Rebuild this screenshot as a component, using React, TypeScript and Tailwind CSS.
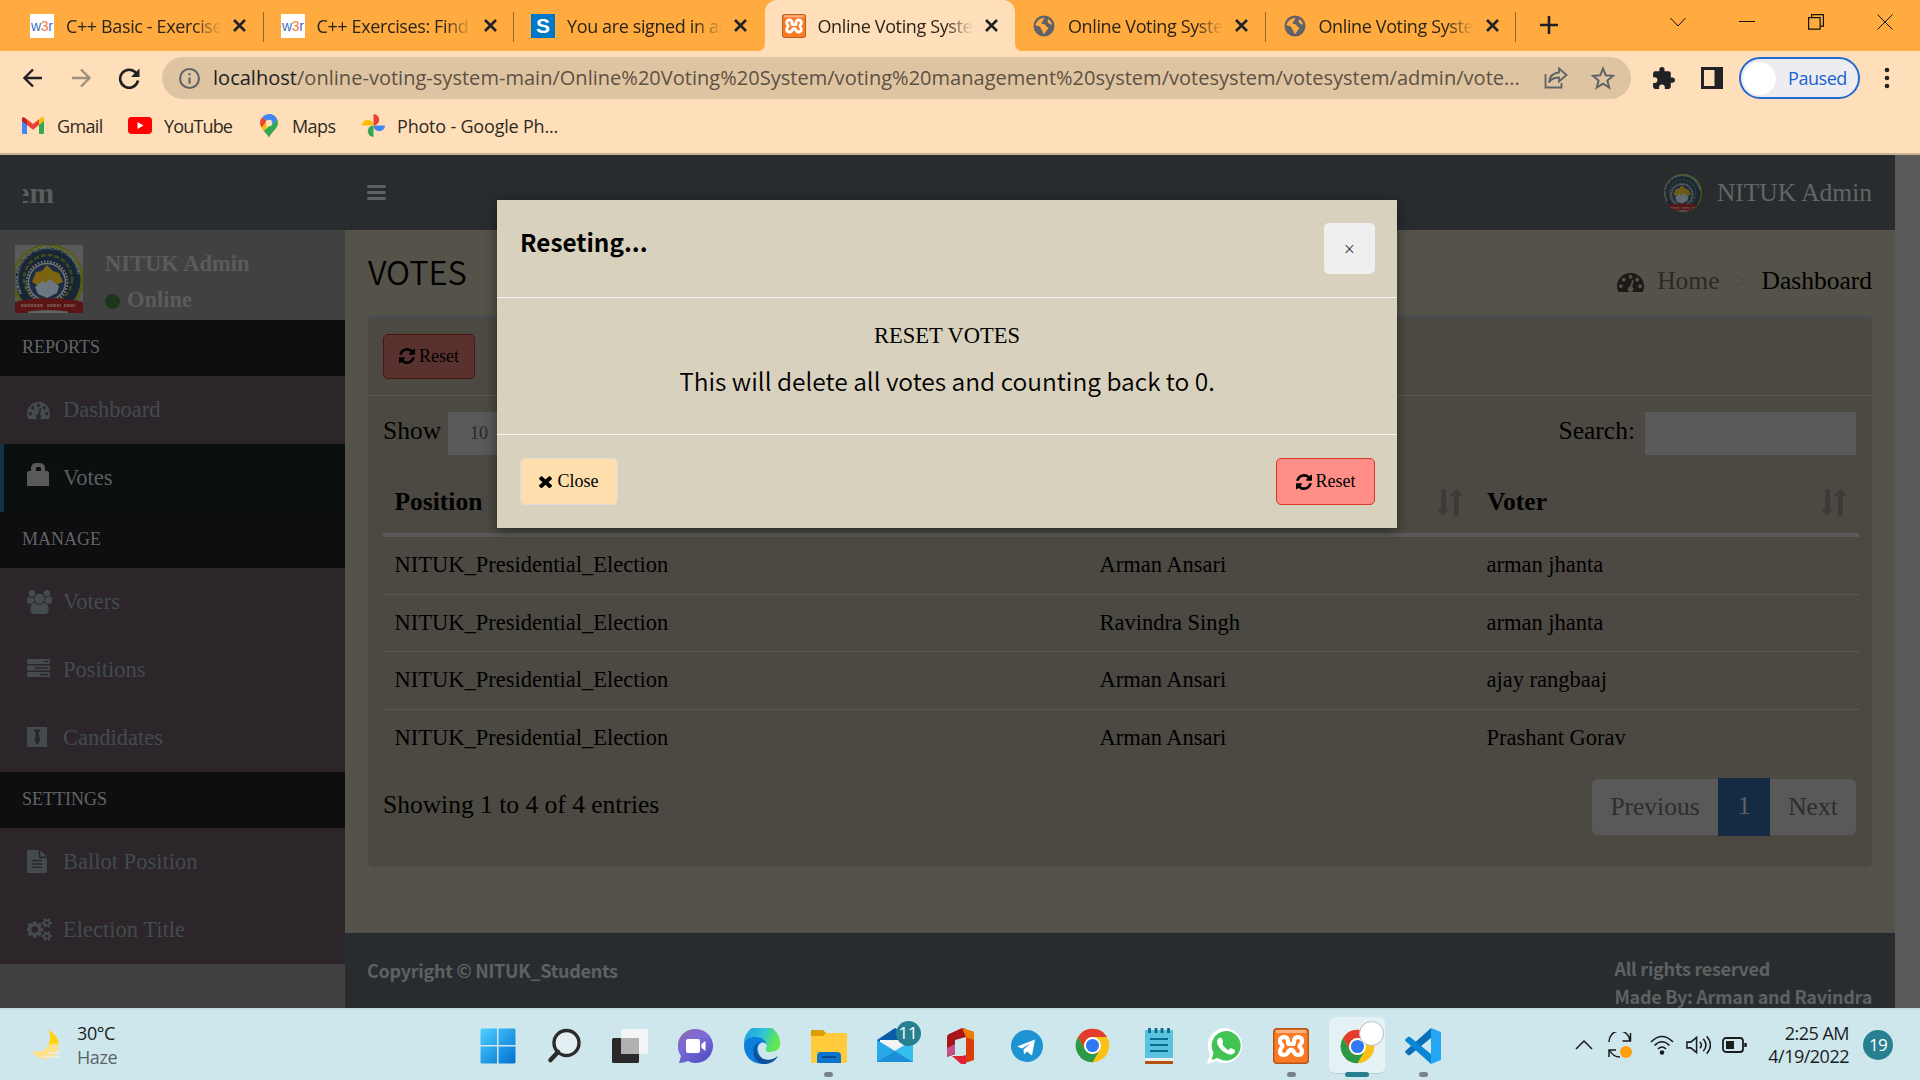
import React from "react";

const UI = "font-['Open_Sans',sans-serif]";
const TIMES = "font-['Liberation_Serif',serif]";
const SOURCE = "font-['Noto_Sans_CJK_JP',sans-serif]";

/* ---------- glyph icons ---------- */

const P = {
  dash: "M384 1152q0-53-37.5-90.5t-90.5-37.5-90.5 37.5-37.5 90.5 37.5 90.5 90.5 37.5 90.5-37.5 37.5-90.5zm192-448q0-53-37.5-90.5t-90.5-37.5-90.5 37.5-37.5 90.5 37.5 90.5 90.5 37.5 90.5-37.5 37.5-90.5zm428 481l101-382q6-26-7.5-48.5t-38.5-29.5-48 6.5-30 39.5l-101 382q-60 5-107 43.5t-63 98.5q-20 77 20 146t117 89 146-20 89-117q16-60-6-117t-72-91zm660-33q0-53-37.5-90.5t-90.5-37.5-90.5 37.5-37.5 90.5 37.5 90.5 90.5 37.5 90.5-37.5 37.5-90.5zm-640-640q0-53-37.5-90.5t-90.5-37.5-90.5 37.5-37.5 90.5 37.5 90.5 90.5 37.5 90.5-37.5 37.5-90.5zm448 192q0-53-37.5-90.5t-90.5-37.5-90.5 37.5-37.5 90.5 37.5 90.5 90.5 37.5 90.5-37.5 37.5-90.5zm320 448q0 261-141 483-19 29-54 29h-1402q-35 0-54-29-141-221-141-483 0-182 71-348t191-286 286-191 348-71 348 71 286 191 191 286 71 348z",
  refresh: "M1639 1056q0 5-1 7-64 268-268 434.5t-478 166.5q-146 0-282.5-55t-243.5-157l-129 129q-19 19-45 19t-45-19-19-45v-448q0-26 19-45t45-19h448q26 0 45 19t19 45-19 45l-137 137q71 66 161 102t187 36q134 0 250-65t186-179q11-17 53-117 8-23 30-23h192q13 0 22.5 9.5t9.5 22.5zm25-800v448q0 26-19 45t-45 19h-448q-26 0-45-19t-19-45 19-45l138-138q-148-137-349-137-134 0-250 65t-186 179q-11 17-53 117-8 23-30 23h-199q-13 0-22.5-9.5t-9.5-22.5v-7q65-268 270-434.5t480-166.5q146 0 284 55.5t245 156.5l130-129q19-19 45-19t45 19 19 45z",
  times: "M1490 1322q0 40-28 68l-136 136q-28 28-68 28t-68-28l-294-294-294 294q-28 28-68 28t-68-28l-136-136q-28-28-28-68t28-68l294-294-294-294q-28-28-28-68t28-68l136-136q28-28 68-28t68 28l294 294 294-294q28-28 68-28t68 28l136 136q28 28 28 68t-28 68l-294 294 294 294q28 28 28 68z",
  users: "M657 896q-162 5-265 128h-134q-82 0-138-40.5t-56-118.5q0-353 124-353 6 0 43.5 21t97.5 42.5 119 21.5q67 0 133-23-5 37-5 66 0 159 81 297zm1071 637q0 120-73 189.5t-194 69.5h-874q-121 0-194-69.5t-73-189.5q0-53 3.5-103.5t14-109 26.5-108.5 43-97.5 62-81 85.5-53.5 111.5-20q10 0 43 21.5t73 48 107 48 135 21.5 135-21.5 107-48 73-48 43-21.5q61 0 111.5 20t85.5 53.5 62 81 43 97.5 26.5 108.5 14 109 3.5 103.5zm-1024-1277q0 106-75 181t-181 75-181-75-75-181 75-181 181-75 181 75 75 181zm704 384q0 159-112.5 271.5t-271.5 112.5-271.5-112.5-112.5-271.5 112.5-271.5 271.5-112.5 271.5 112.5 112.5 271.5zm576 225q0 78-56 118.5t-138 40.5h-134q-103-123-265-128 81-138 81-297 0-29-5-66 66 23 133 23 59 0 119-21.5t97.5-42.5 43.5-21q124 0 124 353zm-128-609q0 106-75 181t-181 75-181-75-75-181 75-181 181-75 181 75 75 181z",
  tasks: "M1024 1408h640v-128h-640v128zm-384-512h1024v-128h-1024v128zm640-512h384v-128h-384v128zm512 832v256q0 26-19 45t-45 19h-1664q-26 0-45-19t-19-45v-256q0-26 19-45t45-19h1664q26 0 45 19t19 45zm0-512v256q0 26-19 45t-45 19h-1664q-26 0-45-19t-19-45v-256q0-26 19-45t45-19h1664q26 0 45 19t19 45zm0-512v256q0 26-19 45t-45 19h-1664q-26 0-45-19t-19-45v-256q0-26 19-45t45-19h1664q26 0 45 19t19 45z",
  file: "M1596 476q14 14 28 36h-472v-472q22 14 36 28zm-476 164h544v1056q0 40-28 68t-68 28h-1344q-40 0-68-28t-28-68v-1600q0-40 28-68t68-28h800v544q0 40 28 68t68 28zm160 736v-64q0-14-9-23t-23-9h-704q-14 0-23 9t-9 23v64q0 14 9 23t23 9h704q14 0 23-9t9-23zm0-256v-64q0-14-9-23t-23-9h-704q-14 0-23 9t-9 23v64q0 14 9 23t23 9h704q14 0 23-9t9-23zm0-256v-64q0-14-9-23t-23-9h-704q-14 0-23 9t-9 23v64q0 14 9 23t23 9h704q14 0 23-9t9-23z",
  cogs: "M832 896q0-106-75-181t-181-75-181 75-75 181 75 181 181 75 181-75 75-181zm768 512q0-52-38-90t-90-38-90 38-38 90q0 53 37.5 90.5t90.5 37.5 90.5-37.5 37.5-90.5zm0-1024q0-52-38-90t-90-38-90 38-38 90q0 53 37.5 90.5t90.5 37.5 90.5-37.5 37.5-90.5zm-384 421v185q0 10-7 19.5t-16 10.5l-155 24q-11 35-32 76 34 48 90 115 7 11 7 20 0 12-7 19-23 30-82.5 89.5t-78.5 59.5q-11 0-21-7l-115-90q-37 19-77 31-11 108-23 155-7 24-30 24h-186q-11 0-20-7.5t-10-17.5l-23-153q-34-10-75-31l-118 89q-7 7-20 7-11 0-21-8-144-133-144-160 0-9 7-19 10-14 41-53t47-61q-23-44-35-82l-152-24q-10-1-17-9.5t-7-19.5v-185q0-10 7-19.5t16-10.5l155-24q11-35 32-76-34-48-90-115-7-11-7-20 0-12 7-20 22-30 82-89t79-59q11 0 21 7l115 90q34-18 77-32 11-108 23-154 7-24 30-24h186q11 0 20 7.5t10 17.5l23 153q34 10 75 31l118-89q8-7 20-7 11 0 21 8 144 133 144 160 0 8-7 19-12 16-42 54t-45 60q23 48 34 82l152 23q10 2 17 10.5t7 19.5zm640 533v140q0 16-149 31-12 27-30 52 51 113 51 138 0 4-4 7-122 71-124 71-8 0-46-47t-52-68q-20 2-30 2t-30-2q-14 21-52 68t-46 47q-2 0-124-71-4-3-4-7 0-25 51-138-18-25-30-52-149-15-149-31v-140q0-16 149-31 13-29 30-52-51-113-51-138 0-4 4-7 4-2 35-20t59-34 30-16q8 0 46 46.5t52 67.5q20-2 30-2t30 2q51-71 92-112l6-2q4 0 124 70 4 3 4 7 0 25-51 138 17 23 30 52 149 15 149 31zm0-1024v140q0 16-149 31-12 27-30 52 51 113 51 138 0 4-4 7-122 71-124 71-8 0-46-47t-52-68q-20 2-30 2t-30-2q-14 21-52 68t-46 47q-2 0-124-71-4-3-4-7 0-25 51-138-18-25-30-52-149-15-149-31v-140q0-16 149-31 13-29 30-52-51-113-51-138 0-4 4-7 4-2 35-20t59-34 30-16q8 0 46 46.5t52 67.5q20-2 30-2t30 2q51-71 92-112l6-2q4 0 124 70 4 3 4 7 0 25-51 138 17 23 30 52 149 15 149 31z",
  lock: "M4 8V5a5 5 0 0 1 5-5h4a5 5 0 0 1 5 5v3h2a2 2 0 0 1 2 2v13H0V10a2 2 0 0 1 2-2zM9 8h5V5.500a1.500 1.500 0 0 0-1.500-1.500h-2a1.500 1.500 0 0 0-1.500 1.500z",
  tie: "M0 0h20v20H0zM6 2.500l3 3.500-1.800 7.500L10.200 18l3-4.500L11.500 6l2.500-3.500z",
};

function Glyph({ d, box, className }: { d: string; box: string; className: string }) {
  return (
    <svg viewBox={box} className={className} fill="currentColor" fillRule="evenodd" preserveAspectRatio="none">
      <path d={d} />
    </svg>
  );
}

/* ---------- logos ---------- */

const Xampp = ({ className }: { className: string }) => (
  <svg viewBox="0 0 36 36" className={className}>
    <rect x="0.700" y="0.700" width="34.600" height="34.600" rx="3" fill="#fb7a24" stroke="#b4561b" strokeWidth="1.400" />
    <path d="M3 2h30v3H3z" fill="#f9b184" />
    <g fill="none" stroke="#fff" strokeWidth="4.200" strokeLinejoin="round" strokeLinecap="round">
      <path d="M15 12.500Q14.500 9 10.800 9 6.500 9.500 7 13.500q.2 2 1.700 3 1.300 1.500 0 3Q7 21 7 23q0 4 4 4 3 0 4.500-3.500" />
      <path d="M21 12.500Q21.500 9 25.200 9q4.300.5 3.800 4.500-.2 2-1.700 3-1.300 1.500 0 3Q29 21 29 23q0 4-4 4-3 0-4.500-3.500" />
      <path d="M15 12.500v2.500M21 12.500v2.500M15.500 23.500q2.500-4 5 0" />
    </g>
    <path d="M14 14h8v4h-8z" fill="#fff" />
  </svg>
);

const Globe = () => (
  <svg viewBox="0 0 24 24" className="size-6">
    <circle cx="12" cy="12" r="10.500" fill="#5f6368" />
    <path d="M5 8c2-3 5-4.500 8-4-2 1-1 2-2.500 3.500-1 .8-1 2-.5 2.500 2 0 4 .5 4.500 3 2.500 0 2 2 .5 3-1.500.8-1 3-3 4-1.500-.5-1-3-2-4-1.500-1-1-2.500-2.500-3.500-1.500-1-3-1-4-1 0-1.300.5-2.500 1.500-3.500zM16 5c2 1 3.500 3 4 5.500-1.500 0-2.500-.5-3.500-1.500s-1-2.500-.5-4z" fill="#ffab40" />
  </svg>
);

const W3r = () => (
  <svg viewBox="0 0 24 24" className="size-6">
    <rect width="24" height="24" fill="#fff" />
    <text x="1" y="17" textLength="22" className="font-['Liberation_Sans',sans-serif] text-[14px]" fill="#3f6fc4">
      w<tspan fill="#f07a3a">3</tspan>r
    </text>
  </svg>
);

const Swayam = () => (
  <span className="flex size-6 items-center justify-center bg-[#0078c8] font-['Liberation_Sans',sans-serif] text-[21px] font-bold leading-none text-white">S</span>
);

const Chrome = ({ className }: { className: string }) => (
  <svg viewBox="0 0 48 48" className={className}>
    <circle cx="24" cy="24" r="23" fill="#fbc116" />
    <path d="M4.080 12.500A23 23 0 0 1 43.920 12.500H24A11.500 11.500 0 0 0 14 29.700z" fill="#e33b2e" />
    <path d="M4.080 12.500A23 23 0 0 0 24 47L34 29.700A11.500 11.500 0 0 1 14 29.700z" fill="#2a9a48" />
    <circle cx="24" cy="24" r="11.500" fill="#fff" />
    <circle cx="24" cy="24" r="9" fill="#3079f0" />
  </svg>
);

function Emblem({ id, className }: { id: string; className: string }) {
  return (
    <svg viewBox="0 0 68 68" className={className}>
      <rect width="68" height="68" fill="#5a5a5a" />
      <ellipse cx="33" cy="35" rx="36" ry="36" fill="#565a14" />
      <circle cx="33" cy="35" r="32.500" fill="#172535" />
      <path id={id} d="M5 52A32 32 0 1 1 61 52" transform="translate(2.500 0) scale(.93)" fill="none" />
      <text className="font-['Liberation_Sans',sans-serif] text-[4.600px] font-bold" fill="#707a80">
        <textPath href={`#${id}`} textLength="104">NATIONAL INSTITUTE OF TECHNOLOGY UTTARAKHAND</textPath>
      </text>
      <circle cx="33" cy="34" r="24" fill="none" stroke="#3d4a1e" strokeWidth="2.600" strokeDasharray="5 2" />
      <circle cx="32" cy="37" r="20.500" fill="none" stroke="#747474" strokeWidth="2" strokeDasharray="1.700 1.500" />
      <circle cx="32" cy="37" r="18.500" fill="#1d2d44" stroke="#747474" strokeWidth="1.500" />
      <path d="M17 37l4-10 6-1 5-6 6 6 6 2 4 9-8 3H22z" fill="#7b6310" />
      <path d="M20 42l7-6 4 2 3-4 5 3 5 4-2 7-10 5-9-4z" fill="#6c7780" />
      <path d="M0 57q34-8 68 0v11H0z" fill="#5b1517" />
      <path d="M13 66.500q20-3 40 0V68H13z" fill="#626262" />
      <path d="M6 60.500h22M32 60.500h14M49 60.500h11" stroke="#7a4a4a" strokeWidth="3" strokeDasharray="2.500 .7" />
    </svg>
  );
}

/* ---------- browser chrome ---------- */

const tabs = [
  { icon: <W3r />, title: "C++ Basic - Exercises", sep: true, cls: "" },
  { icon: <W3r />, title: "C++ Exercises: Find", sep: true, cls: "" },
  { icon: <Swayam />, title: "You are signed in as", sep: false, cls: "" },
  { icon: <Xampp className="size-6" />, title: "Online Voting System", sep: false, cls: "bg-[#ffdfb9] rounded-t-[12px]" },
  { icon: <Globe />, title: "Online Voting System", sep: true, cls: "" },
  { icon: <Globe />, title: "Online Voting System", sep: true, cls: "" },
];

function TabBar() {
  return (
    <div className="flex h-[51px] bg-[#ffab40] pl-[13px] text-[#2a2419]">
      {tabs.map((t, i) => (
        <div key={i} className={`relative flex h-[51px] w-[250.500px] shrink-0 items-center pl-[17px] ${t.cls}`}>
          {i === 3 && (
            <>
              <svg className="absolute bottom-0 -left-2 size-2" viewBox="0 0 8 8"><path d="M8 0v8H0q8 0 8-8z" fill="#ffdfb9" /></svg>
              <svg className="absolute bottom-0 -right-2 size-2" viewBox="0 0 8 8"><path d="M0 0v8h8q-8 0-8-8z" fill="#ffdfb9" /></svg>
            </>
          )}
          {t.icon}
          <span className={`ml-[12px] w-[155px] overflow-hidden whitespace-nowrap text-[18px] leading-6 tracking-[-0.380px] [mask-image:linear-gradient(to_right,#000_82%,transparent)] ${UI}`}>{t.title}</span>
          <svg viewBox="0 0 13 13" className="ml-[12px] size-[13px]"><path d="M1 1l11 11M12 1L1 12" stroke="#202124" strokeWidth="2.600" /></svg>
          {t.sep && <span className="absolute right-0 top-3 h-[30px] w-px bg-[#93672f]" />}
        </div>
      ))}
      <svg viewBox="0 0 18 18" className="ml-[24px] mt-[16px] size-[18px] shrink-0"><path d="M9 0v18M0 9h18" stroke="#202124" strokeWidth="2.600" /></svg>
      <div className="ml-auto mr-[27px] flex h-[43px] items-center gap-[53px]">
        <svg viewBox="0 0 16 16" className="size-4" fill="none" stroke="#111"><path d="M.500 4l7.500 8 7.500-8" /></svg>
        <svg viewBox="0 0 16 16" className="size-4" fill="none" stroke="#111"><path d="M0 7.500h16" /></svg>
        <svg viewBox="0 0 16 16" className="size-4" fill="none" stroke="#111" strokeWidth="1.200"><path d="M.600 3.600h11.500v11.500H.600zM3.600 3.500V.600h11.800v11.500h-3" /></svg>
        <svg viewBox="0 0 16 16" className="size-4" fill="none" stroke="#111"><path d="M.500.500l15 15M15.500.500l-15 15" /></svg>
      </div>
    </div>
  );
}

function Toolbar() {
  return (
    <div className="flex h-[54px] items-center bg-[#ffdfb9]">
      <svg viewBox="0 0 20 20" className="ml-[23px] size-5" fill="none" stroke="#202124" strokeWidth="2.400"><path d="M19 10H2M10 1.500L1.500 10l8.500 8.500" /></svg>
      <svg viewBox="0 0 20 20" className="ml-[28px] size-5" fill="none" stroke="#9f8f7c" strokeWidth="2.400"><path d="M1 10h17M10 1.500l8.500 8.500-8.500 8.500" /></svg>
      <svg viewBox="0 0 22 22" className="ml-[27px] size-[22px]" fill="none" stroke="#202124" strokeWidth="2.600"><path d="M18.500 6.500A9 9 0 1 0 20 13.500" /><path d="M21.500 1.500v8.500H13z" fill="#202124" stroke="none" /></svg>
      <div className="ml-[22px] flex h-[42px] w-[1469px] shrink-0 items-center rounded-full bg-[#dfc4a1] text-[#5c5144]">
        <svg viewBox="0 0 20 20" className="ml-[17px] size-[21px]" fill="none" stroke="#5f6368" strokeWidth="2"><circle cx="10" cy="10" r="9" /><path d="M10 9v6M10 5v2" /></svg>
        <span className={`ml-[13px] w-[1310px] whitespace-nowrap text-[20px] leading-[26px] tracking-[0.025px] ${UI}`}>
          <span className="text-[#202124]">localhost</span>/online-voting-system-main/Online%20Voting%20System/voting%20management%20system/votesystem/votesystem/admin/vote...
        </span>
        <svg viewBox="0 0 24 22" className="ml-[21px] h-[22px] w-[24px] shrink-0" fill="none" stroke="#5f6368" strokeWidth="1.800"><path d="M1.500 7v13.500h16V16" /><path d="M15 1.500l7.500 6.500-7.500 6.500v-4c-5 0-8 1.500-10 5 .5-6 4-9.500 10-10z" /></svg>
        <svg viewBox="0 0 24 24" className="ml-[23px] size-6 shrink-0" fill="none" stroke="#5f6368" strokeWidth="2"><path d="M12 2.500l2.700 6.800 7.300.5-5.600 4.700 1.800 7.100-6.200-3.900-6.200 3.900 1.800-7.100L2 9.800l7.300-.5z" /></svg>
      </div>
      <svg viewBox="0 0 24 24" className="ml-[20px] size-[25px] shrink-0" fill="#202124"><path d="M20.500 11H19V7a2 2 0 0 0-2-2h-4V3.500a2.500 2.500 0 0 0-5 0V5H4a2 2 0 0 0-2 2v3.800h1.500a2.700 2.700 0 0 1 0 5.400H2V20a2 2 0 0 0 2 2h3.800v-1.500a2.700 2.700 0 0 1 5.400 0V22H17a2 2 0 0 0 2-2v-4h1.500a2.500 2.500 0 0 0 0-5z" /></svg>
      <svg viewBox="0 0 22 22" className="ml-[25px] h-[22px] w-[22px] shrink-0" fillRule="evenodd" fill="#202124"><path d="M0 0h22v22H0zM3 3v16h10.500V3z" /></svg>
      <div className="ml-[16px] flex h-[42px] w-[121px] shrink-0 items-center rounded-full border-2 border-[#2269d3] bg-[#ededf1]">
        <span className="ml-[2px] size-[33px] rounded-full bg-white" />
        <span className={`ml-[12px] text-[18px] leading-6 tracking-[-0.450px] text-[#1b62d0] ${UI}`}>Paused</span>
      </div>
      <svg viewBox="0 0 6 24" className="ml-[24px] h-6 w-[6px]" fill="#202124"><circle cx="3" cy="4" r="2.300" /><circle cx="3" cy="12" r="2.300" /><circle cx="3" cy="20" r="2.300" /></svg>
    </div>
  );
}

function Bookmarks() {
  const txt = `whitespace-nowrap text-[18px] leading-6 text-[#2f291f] ${UI}`;
  return (
    <div className="flex h-[50px] items-center border-b-2 border-[#c9b08f] bg-[#ffdfb9] pl-[22px] pb-[7px]">
      <svg viewBox="0 0 22 17" className="h-[17px] w-[22px]"><path d="M0 2v13.500A1.500 1.500 0 0 0 1.500 17H5V7z" fill="#4285f4" /><path d="M22 2v13.500a1.500 1.500 0 0 1-1.500 1.500H17V7z" fill="#34a853" /><path d="M17 2.500L20 .3c1-.6 2 .2 2 1.700v2L17 8z" fill="#fbbc04" /><path d="M0 4V2C0 .3 1 0 2 .3l3 2.200V8z" fill="#c5221f" /><path d="M5 2.300l6 4.700 6-4.700V8l-6 4.700L5 8z" fill="#ea4335" /></svg>
      <span className={`ml-[13px] w-[46px] tracking-[-0.650px] ${txt}`}>Gmail</span>
      <svg viewBox="0 0 24 20" className="ml-[25px] h-[17px] w-6" preserveAspectRatio="none"><rect width="24" height="20" rx="4" fill="#f00" /><path d="M9.500 6v8l6-4z" fill="#fff" /></svg>
      <span className={`ml-[12px] w-[70px] tracking-[-0.850px] ${txt}`}>YouTube</span>
      <svg viewBox="0 0 18 24" className="ml-[26px] h-6 w-[18px]"><path d="M9 24c1-5 9-9 9-15a9 9 0 0 0-.8-3.800L3.500 17C6 19.500 8 21 9 24z" fill="#34a853" /><path d="M1.500 13.500C2 15 3 16.300 3.500 17L12 7 6 7.500z" fill="#fbbc04" /><path d="M2.200 3.200A9 9 0 0 0 1.500 13.500L7 7z" fill="#ea4335" /><path d="M2.200 3.200A9 9 0 0 1 17.200 5.200L12 11 7 7z" fill="#4285f4" /><circle cx="9" cy="9" r="3.300" fill="#ffdfb9" /></svg>
      <span className={`ml-[14px] w-[44px] tracking-[-0.600px] ${txt}`}>Maps</span>
      <svg viewBox="0 0 24 24" className="ml-[26px] size-[23px]"><path d="M12 0a6 6 0 0 1 0 12z" fill="#ea4335" /><path d="M24 12a6 6 0 0 1-12 0z" fill="#4285f4" /><path d="M12 24a6 6 0 0 1 0-12z" fill="#34a853" /><path d="M0 12a6 6 0 0 1 12 0z" fill="#fbbc04" /></svg>
      <span className={`ml-[12px] tracking-[-0.200px] ${txt}`}>Photo - Google Ph...</span>
    </div>
  );
}

/* ---------- sidebar ---------- */

const NavHead = ({ children }: { children: React.ReactNode }) => (
  <div className="h-[56px] bg-[#0e0e10] pl-[22px] text-[18px] leading-[54px] text-[#636566]">{children}</div>
);

function NavItem({ icon, label, active }: { icon: React.ReactNode; label: string; active?: boolean }) {
  return (
    <div className={active ? "flex h-[68px] items-center border-l-4 border-[#153143] bg-[#0a0f10] pl-[23px] text-[#5e5e5e]" : "flex h-[68px] items-center bg-[#2c262a] pl-[27px] text-[#434b4e]"}>
      <span className="flex w-[36px] items-center pb-px">{icon}</span>
      <span className="text-[22.500px] leading-[26px]">{label}</span>
    </div>
  );
}

function Sidebar() {
  return (
    <aside className={`flex w-[345px] shrink-0 flex-col bg-[#414141] ${TIMES}`}>
      <div className="flex h-[75px] items-center bg-[#282c2f] pl-[23px]">
        <div className="flex h-[40px] w-[31px] justify-end overflow-hidden">
          <span className="whitespace-nowrap text-[29.500px] font-bold leading-[40px] text-[#5b5c5d]">em</span>
        </div>
      </div>
      <div className="flex h-[90px] pl-[15px] pt-[15px]">
        <Emblem id="arc-side" className="size-[68px]" />
        <div className="ml-[22px] text-[22.500px] font-bold leading-[26px] text-[#5b5b5b]">
          <div className="mt-[6px]">NITUK Admin</div>
          <div className="mt-[10px] flex items-center"><span className="mr-[7px] mt-[2px] size-[15px] rounded-full bg-[#1c361d]" />Online</div>
        </div>
      </div>
      <NavHead>REPORTS</NavHead>
      <NavItem label="Dashboard" icon={<Glyph d={P.dash} box="0 128 1792 1408" className="h-[19px] w-[23px]" />} />
      <NavItem label="Votes" active icon={<Glyph d={P.lock} box="0 0 22 23" className="mb-[6px] h-[23px] w-[22px] text-[#595959]" />} />
      <NavHead>MANAGE</NavHead>
      <NavItem label="Voters" icon={<Glyph d={P.users} box="64 0 1920 1792" className="h-[24px] w-[25px]" />} />
      <NavItem label="Positions" icon={<Glyph d={P.tasks} box="0 128 1792 1408" className="mb-[3px] h-[18px] w-[23px]" />} />
      <NavItem label="Candidates" icon={<Glyph d={P.tie} box="0 0 20 20" className="mb-px h-[20px] w-[20px]" />} />
      <NavHead>SETTINGS</NavHead>
      <NavItem label="Ballot Position" icon={<Glyph d={P.file} box="128 0 1536 1792" className="mb-px h-[23px] w-[20px]" />} />
      <NavItem label="Election Title" icon={<Glyph d={P.cogs} box="0 0 1856 1792" className="h-[23px] w-[25px]" />} />
    </aside>
  );
}

/* ---------- main content ---------- */

const rows = [
  ["Arman Ansari", "arman jhanta"],
  ["Ravindra Singh", "arman jhanta"],
  ["Arman Ansari", "ajay rangbaaj"],
  ["Arman Ansari", "Prashant Gorav"],
];

const Sort = ({ className }: { className: string }) => (
  <svg viewBox="0 0 26 27" className={className} fill="#3c3b37"><path d="M4 0h5v20h4l-6.500 7L0 20h4zM17 27h5V7h4l-6.500-7L13 7h4z" /></svg>
);

function Main() {
  return (
    <main className={`flex w-[1550px] shrink-0 flex-col bg-[#555249] text-black ${TIMES}`}>
      <header className="flex h-[75px] items-center bg-[#282c2f] pl-[22px] pr-[23px] text-[#636566]">
        <div className="flex h-[15px] w-[19px] flex-col justify-between">
          <span className="h-[3px] rounded-sm bg-[#5e6062]" /><span className="h-[3px] rounded-sm bg-[#5e6062]" /><span className="h-[3px] rounded-sm bg-[#5e6062]" />
        </div>
        <Emblem id="arc-top" className="ml-auto size-[38px] rounded-full opacity-85" />
        <span className="ml-[15px] pt-[2px] text-[25.500px]">NITUK Admin</span>
      </header>

      <div className="flex h-[85px] justify-between pl-[23px] pr-[23px]">
        <h1 className={`pt-[17px] text-[32.500px] font-[350] leading-[48px] tracking-[0px] ${SOURCE}`}>VOTES</h1>
        <div className="flex items-center pt-[17px] text-[25.500px] leading-[30px]">
          <Glyph d={P.dash} box="0 128 1792 1408" className="h-[21px] w-[27px] text-[#1b1a18]" />
          <span className="ml-[13px] text-[#2b2925]">Home</span>
          <span className="w-[42px] text-center text-[#4b4a48]">&gt;</span>
          <span>Dashboard</span>
        </div>
      </div>

      <section className="ml-[23px] mr-[23px] h-[551px] rounded-[5px] border-t-4 border-[#4b4c4f] bg-[#4c4942] shadow-[0_1px_1px_rgba(0,0,0,0.100)]">
        <div className="h-[77px] border-b border-[#5a5957] pl-[15px] pt-[15px]">
          <div className="flex h-[45px] w-[92px] items-center justify-center rounded-[5px] border border-[#4b140d] bg-[#59322f] pb-px text-[18px]">
            <Glyph d={P.refresh} box="128 128 1536 1536" className="mr-[4px] size-[16px]" />Reset
          </div>
        </div>
        <div className="pl-[15px] pr-[16px] text-[25.500px]">
          <div className="flex h-[74px] items-start pt-[16px] leading-[38px]">
            <span>Show</span>
            <div className="ml-[7px] h-[43px] w-[90px] bg-[#595959] pl-[22px] text-[18px] leading-[43px] text-[#292929]">10</div>
            <span className="ml-auto">Search:</span>
            <div className="ml-[10px] h-[43px] w-[211px] bg-[#595959]" />
          </div>
          <div className="flex h-[67px] w-[1476px] items-center border-b-4 border-[#5a5a59] pl-[11.500px] pt-[1px] font-bold">
            <span className="w-[704.500px]">Position</span>
            <span className="w-[338px]">Candidate</span>
            <Sort className="h-[27px] w-[26px]" />
            <span className="ml-[24px]">Voter</span>
            <Sort className="ml-auto mr-[12px] h-[27px] w-[26px]" />
          </div>
          {rows.map((r, i) => (
            <div key={i} className={`flex h-[57.500px] w-[1476px] items-center pl-[11.500px] text-[22.500px] ${i < 3 ? "border-b border-[#5a5957]" : ""}`}>
              <span className="w-[705px]">NITUK_Presidential_Election</span>
              <span className="w-[387px]">{r[0]}</span>
              <span>{r[1]}</span>
            </div>
          ))}
          <div className="flex items-start pt-[11px]">
            <span className="pt-[8px] leading-[38px]">Showing 1 to 4 of 4 entries</span>
            <div className="ml-auto flex h-[58px] items-center overflow-hidden rounded-[6px] text-center leading-[56px] text-[#2d2d2d]">
              <span className="h-[56px] w-[126px] rounded-l-[6px] bg-[#595959]">Previous</span>
              <span className="h-[58px] w-[52px] bg-[#142b43] text-[#5f6368]">1</span>
              <span className="h-[56px] w-[86px] rounded-r-[6px] bg-[#595959]">Next</span>
            </div>
          </div>
        </div>
      </section>

      <footer className={`mt-[66px] flex h-[76px] justify-between overflow-hidden border-t border-[#4b4d4f] bg-[#282c2f] pl-[22px] pr-[23px] text-[18px] font-bold leading-[28px] tracking-[-0.270px] text-[#5f6163] ${SOURCE}`}>
        <span className="pt-[23px]">Copyright © NITUK_Students</span>
        <span className="whitespace-nowrap pt-[21px]">All rights reserved<br />Made By: Arman and Ravindra</span>
      </footer>
    </main>
  );
}

/* ---------- dialog ---------- */

function Modal() {
  return (
    <div className="absolute left-[497px] top-[200px] flex h-[328px] w-[900px] flex-col bg-[#d8d1bd] text-black shadow-[0_3px_12px_rgba(0,0,0,0.450)]">
      <div className="flex h-[98px] justify-between border-b border-[#f4f4f4] pl-[23px] pr-[22px] pt-[23px]">
        <span className={`text-[24.300px] font-bold leading-[38px] ${SOURCE}`}>Reseting...</span>
        <span className={`flex h-[51px] w-[51px] items-center justify-center rounded-[5px] bg-[#efefef] text-[20px] text-[#444] ${TIMES}`}>×</span>
      </div>
      <div className="flex h-[137px] flex-col items-center border-b border-[#f4f4f4] pt-[23px]">
        <p className={`text-[22.500px] leading-[30px] ${TIMES}`}>RESET VOTES</p>
        <h2 className={`mt-[10px] whitespace-nowrap text-[24.500px] font-[350] leading-[40px] ${SOURCE}`}>This will delete all votes and counting back to 0.</h2>
      </div>
      <div className={`flex justify-between pl-[23px] pr-[22px] pt-[23px] text-[18px] ${TIMES}`}>
        <span className="flex h-[47px] w-[98px] items-center justify-center rounded-[5px] border border-[#ddd] bg-[#ffdead]">
          <Glyph d={P.times} box="302 238 1188 1316" className="mr-[5px] h-[13px] w-[13px]" />Close
        </span>
        <span className="flex h-[47px] w-[99px] items-center justify-center rounded-[5px] border border-[#d73925] bg-[#ff8e88]">
          <Glyph d={P.refresh} box="128 128 1536 1536" className="mr-[4px] size-[16px]" />Reset
        </span>
      </div>
    </div>
  );
}

/* ---------- taskbar ---------- */

const apps: { icon: React.ReactNode; dot?: boolean; active?: boolean }[] = [
  { icon: <svg viewBox="0 0 36 36" className="size-[36px]"><defs><linearGradient id="win" x1="0" y1="0" x2="1" y2="1"><stop offset="0" stopColor="#4fd0ff" /><stop offset="1" stopColor="#0070d0" /></linearGradient></defs><path d="M1.500 .5h15.500v16.500H.500V1.500zM18.500.500h16l1 1v15.500h-17zM.500 18.500H17v17H1.500l-1-1zM18.500 18.500h17v16l-1 1h-16z" fill="url(#win)" /></svg> },
  { icon: <svg viewBox="0 0 36 36" className="size-[36px]" fill="none" stroke="#2b2b2b"><circle cx="20.500" cy="15" r="12.500" strokeWidth="3.400" fill="#e3eff2" /><path d="M12 24L4.500 32" strokeWidth="4.500" strokeLinecap="round" /></svg> },
  { icon: <svg viewBox="0 0 36 36" className="size-[36px]"><rect x="0" y="10" width="27" height="25" rx="1.500" fill="#2a2a2a" /><rect x="9" y="1" width="27" height="25" rx="1.500" fill="#f4f4f4" /><path d="M9 10h18v16H9z" fill="#b0b0b0" /></svg> },
  { icon: <svg viewBox="0 0 36 36" className="size-[36px]"><defs><linearGradient id="chat" x1="0" y1="0" x2=".6" y2="1"><stop offset="0" stopColor="#9268b0" /><stop offset=".5" stopColor="#7a6ad6" /><stop offset="1" stopColor="#5552c4" /></linearGradient></defs><path d="M18 1a17 17 0 1 1-8 32q-5 2-9 2l2-7A17 17 0 0 1 18 1z" fill="url(#chat)" /><rect x="8" y="11" width="14" height="14" rx="2" fill="#fff" /><path d="M23.500 16l4-3v10l-4-3z" fill="#fff" /></svg> },
  { icon: <svg viewBox="0 0 36 36" className="size-[36px]"><defs><linearGradient id="ed" x1="0" y1="0" x2="1" y2=".3"><stop offset="0" stopColor="#1c9bdc" /><stop offset=".55" stopColor="#2fc2da" /><stop offset="1" stopColor="#63e84c" /></linearGradient></defs><path d="M0 16A18 18 0 0 1 36 14c1 7-4 10-10 10-4 0-5-2-4-4 2-3 0-7-5-8Q6 9 0 16z" fill="url(#ed)" /><path d="M0 18c0-7 6-9 11-9 7 0 11 4 12 8-1-2-4-3-6-2-4 2-4 7-2 11s6 8 10 9C10 39 0 29 0 18z" fill="#0c7fdc" /><path d="M17 14c-7 3-6 14 3 17 5 2 10 0 14-3-4 8-14 10-20 6C6 27 9 15 17 14z" fill="#114f9b" /></svg> },
  { dot: true, icon: <svg viewBox="0 0 36 36" className="size-[36px]"><path d="M0 2.500Q0 2 1 2h11l4 4v8H0z" fill="#dd9c00" /><path d="M0 8h12l3-3h20q1 0 1 1v28q0 1-1 1H1q-1 0-1-1z" fill="#ffcb3d" /><path d="M6 35v-7q0-4 4-4h16q4 0 4 4v7z" fill="#0b74cc" /><path d="M11 29h14" stroke="#0a4a8c" strokeWidth="2" /></svg> },
  { icon: <span className="relative"><svg viewBox="0 0 36 36" className="size-[36px]"><path d="M0 12L18 0l18 12v10H0z" fill="#0a5cab" /><path d="M3 12h30v8L18 25 3 16z" fill="#f3f3f3" /><path d="M0 12l18 11L36 12v22H0z" fill="#27a8e8" /><path d="M18 23l18 11H0z" fill="#1c8fd8" /><path d="M18 23l18-11v22z" fill="#35bdf0" /></svg><span className={`absolute -right-[8px] -top-[7px] flex size-[25px] items-center justify-center rounded-full bg-[#27808f] text-[17px] text-white ${UI}`}>11</span></span> },
  { icon: <svg viewBox="0 0 36 36" className="size-[36px]"><path d="M19 0l12 4v28l-12 4V28l4-1V9l-4-1z" fill="#dc3e08" /><path d="M19 0l4 1v8l-11 3v14l-8 3V9q0-2 2-3z" fill="#a71518" /><path d="M19 0l12 4v8l-8-3z" fill="#ee7d06" /><path d="M4 20l8-4v9l-8 4z" fill="#c4508c" /><path d="M9 28h14v8h-5z" fill="#dc2237" /></svg> },
  { icon: <svg viewBox="0 0 36 36" className="size-[36px]"><circle cx="18" cy="18" r="16" fill="#1d93d2" /><path d="M8 18.500L26 11.500l-3 16-5-4-3 3-.5-5 7.500-6.500-9 5.500z" fill="#fff" /></svg> },
  { icon: <Chrome className="size-[35px]" /> },
  { icon: <svg viewBox="0 0 36 36" className="size-[36px]"><rect x="4" y="2" width="28" height="29" fill="#5cc3de" /><path d="M4 30h28v3H4z" fill="#eee" /><path d="M4 33h28v3H4z" fill="#b4520f" /><path d="M9 11h18M9 17h18M9 23h18" stroke="#056f93" strokeWidth="2" /><path d="M8.500 0v5M15 0v5M21 0v5M27.500 0v5" stroke="#0a6a8a" strokeWidth="2.800" /></svg> },
  { icon: <svg viewBox="0 0 36 36" className="size-[36px]"><path d="M18.500 0a17.500 17.500 0 1 1-9 33L0 36l3-10A17.500 17.500 0 0 1 18.500 0z" fill="#fff" /><path d="M18.500 3a14.800 14.800 0 1 1-8 27l-6 2 2-7A14.800 14.800 0 0 1 18.500 3z" fill="#42c455" /><path d="M12 10c2-1 3 0 3.500 2s1 2 0 3.500c-.5 1 3 5.500 6 6.500 1-.3 1.500-2 2.500-2l4 2c.5 3-2.500 4.500-4.500 4.500C17 26 10.500 19 10 14c0-1.500.5-3 2-4z" fill="#fff" /></svg> },
  { dot: true, icon: <Xampp className="size-[36px]" /> },
  { active: true, icon: <span className="relative"><Chrome className="size-[35px]" /><span className="absolute -right-[9px] -top-[8px] size-[25px] rounded-full border border-[#b5bbbd] bg-white" /></span> },
  { dot: true, icon: <svg viewBox="0 0 36 36" className="size-[36px]"><path d="M26 0l10 4v28l-10 4z" fill="#24a6f2" /><path d="M26 0v10L5 27q-1 .8-2 0l-2.300-2q-1.200-1.200 0-2.300z" fill="#0b6fb8" /><path d="M26 36V26L5 9q-1-.8-2 0L.700 11q-1.200 1.200 0 2.300z" fill="#0a87d4" /></svg> },
];

function Taskbar() {
  return (
    <div className={`flex h-[72px] border-t-2 border-[#c3dbe2] bg-[#cee7ed] text-[18px] text-[#1a1c1d] ${UI}`}>
      <div className="flex w-[465px] items-center pl-[30px]">
        <svg viewBox="0 0 34 36" className="size-[34px]"><path d="M19 2q11 7 10 18-1 12-13 13-10 0-15-8 11 1 16-5 5-7 2-18z" fill="#ffe08a" /><path d="M19 2q11 7 10 16-6-4-11 1 4-7 1-17z" fill="#ffd20f" /><path d="M18 26q9 2 14-2M12 30q12 1 19 0" stroke="#eef1e4" strokeWidth="2.500" fill="none" opacity=".7" /></svg>
        <div className="ml-[13px] leading-[24px] tracking-[-0.400px]"><div>30°C</div><div className="text-[#5a6467]">Haze</div></div>
      </div>
      <div className="flex">
        {apps.map((a, i) => (
          <div key={i} className="relative flex h-[71px] w-[66.100px] items-center justify-center">
            <div className={a.active ? "flex h-[57px] w-[56px] items-center justify-center rounded-[6px] border-b border-[#b9ced4] bg-[#e4f1f5] pt-0.5" : "flex h-[57px] w-[56px] items-center justify-center"}>{a.icon}</div>
            {a.dot && <span className="absolute bottom-[4px] h-[5px] w-[9px] rounded-full bg-[#788488]" />}
            {a.active && <span className="absolute bottom-[4px] h-[5px] w-[24px] rounded-full bg-[#27808f]" />}
          </div>
        ))}
      </div>
      <div className="ml-auto mr-[27px] flex items-center">
        <svg viewBox="0 0 18 10" className="mr-[15px] h-[10px] w-[18px]" fill="none" stroke="#1a1c1d" strokeWidth="1.500"><path d="M1 9l8-8 8 8" /></svg>
        <svg viewBox="0 0 24 26" className="mr-[18px] h-[26px] w-6" fill="none" stroke="#1a1c1d" strokeWidth="1.500"><path d="M1 10a10.500 10.500 0 0 1 21-1M22.500 1v8h-8M1 25v-7h7M1.500 18Q5 25 12 25" /><circle cx="18" cy="20" r="6" fill="#ff9f0a" stroke="none" /></svg>
        <svg viewBox="0 0 24 20" className="mr-[12px] h-[20px] w-6" fill="none" stroke="#1a1c1d" strokeWidth="1.600"><path d="M1 7q11-11 22 0M4.500 10.500q7.500-7.500 15 0M8 14q4-4 8 0" /><circle cx="12" cy="17.500" r="1.500" fill="#1a1c1d" /></svg>
        <svg viewBox="0 0 26 22" className="mr-[11px] h-[22px] w-[25px]" fill="none" stroke="#1a1c1d" strokeWidth="1.600"><path d="M1 8h4l6-5v16l-6-5H1zM14.500 7.500q3 3.500 0 7M18 4.500q5.500 6.500 0 13M21.500 2q8 9 0 18" /></svg>
        <svg viewBox="0 0 25 16" className="mr-[21px] h-[16px] w-[25px]" fill="none" stroke="#1a1c1d" strokeWidth="1.800"><rect x="1" y="1" width="20" height="14" rx="3" /><path d="M4 4h8v8H4z" fill="#1a1c1d" stroke="none" /><path d="M23.500 6v4" strokeWidth="2.500" /></svg>
        <div className="w-[81px] whitespace-nowrap text-right leading-[23px] tracking-[-0.500px]"><div>2:25 AM</div><div>4/19/2022</div></div>
        <span className="ml-[14px] flex size-[30px] items-center justify-center rounded-full bg-[#27808f] text-[17px] tracking-[-0.800px] text-white">19</span>
      </div>
    </div>
  );
}

export default function App() {
  return (
    <div className="relative flex h-[1080px] w-[1920px] flex-col overflow-hidden">
      <TabBar />
      <Toolbar />
      <Bookmarks />
      <div className="flex h-[853px] overflow-hidden">
        <Sidebar />
        <Main />
        <div className="w-[25px] bg-[#595959]" />
      </div>
      <Taskbar />
      <Modal />
    </div>
  );
}
